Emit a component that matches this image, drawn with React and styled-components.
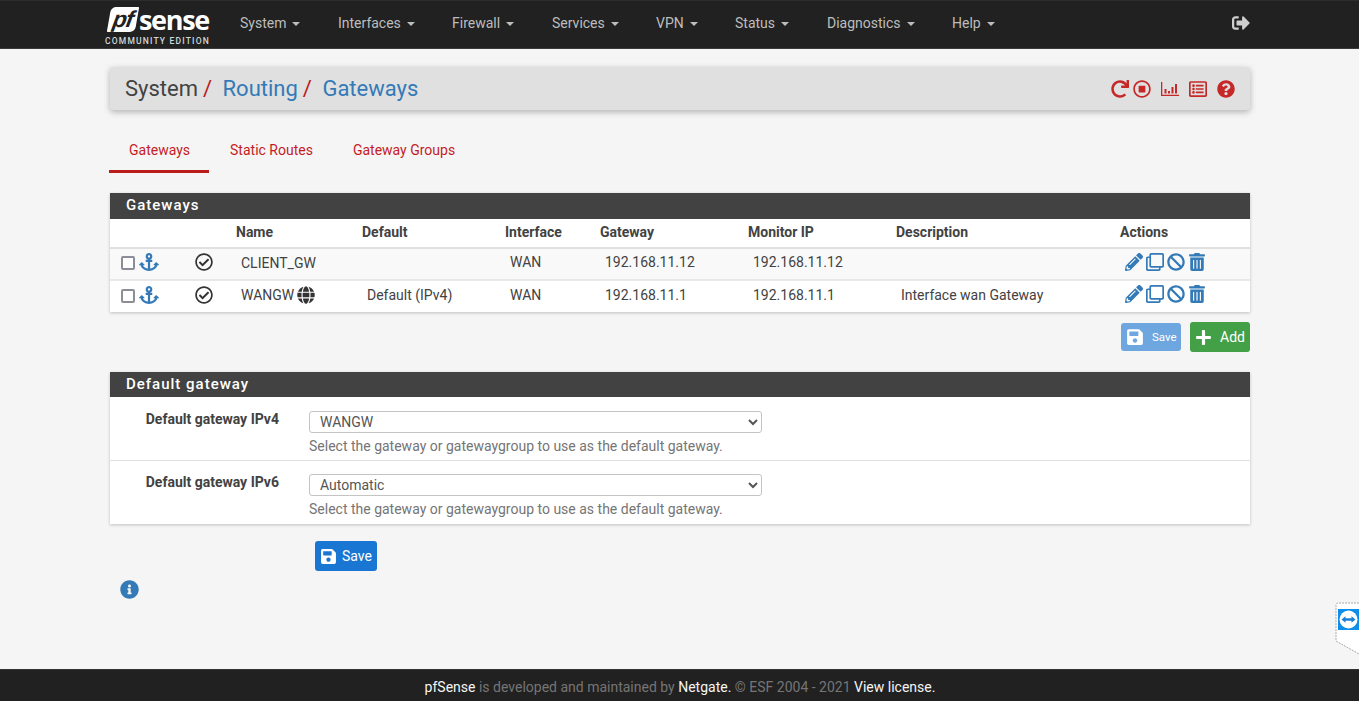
import React from 'react'
import styled, { createGlobalStyle } from 'styled-components'
import {
  FaAnchor,
  FaBan,
  FaGlobe,
  FaInfoCircle,
  FaPencilAlt,
  FaPlus,
  FaQuestionCircle,
  FaRedo,
  FaRegCheckCircle,
  FaRegClone,
  FaRegListAlt,
  FaRegStopCircle,
  FaSave,
  FaSignOutAlt,
  FaTrashAlt,
} from 'react-icons/fa'

const GlobalStyle = createGlobalStyle`
  html, body {
    margin: 0;
    padding: 0;
    background: #f5f5f5;
    font-family: Roboto, "Liberation Sans", sans-serif;
    font-size: 14px;
    color: #424242;
  }
  * { box-sizing: border-box; }
`

const Page = styled.div`
  position: relative;
  min-height: 701px;
  display: flex;
  flex-direction: column;
`

const Navbar = styled.nav`
  height: 49px;
  background: #212121;
  border-top: 1px solid #2c2c2c;
  border-bottom: 1px solid #3a3a3a;
  display: flex;
  align-items: center;
  padding-left: 105px;
  padding-right: 109px;
`

const Logo = styled.div`
  width: 107px;
  height: 44px;
  padding-top: 4px;
  display: flex;
  flex-direction: column;
  color: #fff;
`

const LogoTop = styled.div`
  display: flex;
  align-items: center;
  height: 25px;
  padding-left: 4px;
`

const LogoBox = styled.span`
  width: 28px;
  height: 25px;
  background: #fff;
  color: #212121;
  font: italic 700 23px/24px "Liberation Sans", sans-serif;
  text-align: center;
  border-radius: 5px 1px 5px 1px;
  letter-spacing: -1px;
  transform: skewX(-10deg);
`

const LogoWord = styled.span`
  font: 700 27px/25px "Open Sans", sans-serif;
  margin-left: 2px;
  letter-spacing: -1.3px;
`

const LogoEdition = styled.div`
  font: 500 8.5px/10px Roboto, sans-serif;
  letter-spacing: 1.18px;
  color: #cfd8dc;
  margin-top: 4px;
  white-space: nowrap;
`

const NavList = styled.ul`
  list-style: none;
  margin: 0 0 4px 13px;
  padding: 0;
  display: flex;
  flex: 1;
`

const NavItem = styled.li`
  width: ${props => props.width}px;
  padding-left: 15px;
  color: #bdbdbd;
  white-space: nowrap;
  line-height: 20px;
`

const Caret = styled.span`
  display: inline-block;
  margin-left: 6px;
  vertical-align: middle;
  border-top: 4px solid #bdbdbd;
  border-left: 4px solid transparent;
  border-right: 4px solid transparent;
`

const LogoutButton = styled.span`
  color: #cfcfcf;
  font-size: 18px;
  line-height: 1;
  display: flex;
  margin-bottom: 4px;
`

const Content = styled.main`
  width: 1140px;
  margin: 18px 0 0 110px;
  flex: 1;
`

const Breadcrumb = styled.header`
  height: 43px;
  background: #e0e0e0;
  border-radius: 3px;
  box-shadow: 0 2px 6px rgba(0, 0, 0, 0.28);
  display: flex;
  align-items: center;
  justify-content: space-between;
  padding: 0 15px;
`

const Crumbs = styled.h1`
  margin: 0;
  font-size: 22px;
  font-weight: 400;
  color: #424242;
`

const CrumbLink = styled.a`
  color: #337ab7;
  margin-left: 10.5px;
`

const Slash = styled.span`
  color: #b71c1c;
  margin-left: 5px;
`

const PageIcons = styled.div`
  display: flex;
  align-items: center;
  color: #c62828;
  gap: 10px;
  svg { display: block; }
`

const RefreshPair = styled.span`
  display: flex;
  align-items: center;
  gap: 4px;
`

const Tabs = styled.ul`
  list-style: none;
  margin: 20px 0 20px -1px;
  padding: 0;
  display: flex;
  height: 43px;
`

const Tab = styled.li`
  padding: 12px 19px 0 20px;
  margin-right: 1px;
  color: #c41c24;
  line-height: 16px;
  border-bottom: 3px solid ${props => (props.active ? '#bb1c1c' : 'transparent')};
`

const Panel = styled.section`
  background: #fff;
  box-shadow: 0 1px 3px rgba(0, 0, 0, 0.22);
`

const PanelHeading = styled.h2`
  margin: 0;
  height: ${props => props.height}px;
  padding-left: 16px;
  background: #424242;
  color: #fff;
  font-size: 15px;
  font-weight: 500;
  letter-spacing: 1px;
  line-height: 24px;
`

const Table = styled.table`
  width: 100%;
  border-collapse: collapse;
  table-layout: fixed;
`

const HeadCell = styled.th`
  height: 29px;
  padding: 0 0 2px 5px;
  text-align: left;
  font-weight: 700;
  color: #424242;
  border-bottom: 2px solid #e0e0e0;
`

const Row = styled.tr`
  background: ${props => (props.striped ? '#f9f9f9' : '#fff')};
  border-bottom: ${props => (props.last ? '0' : '2px solid #e8e8e8')};
`

const Cell = styled.td`
  height: 32px;
  padding: 0 0 4px 10px;
  color: #424242;
  white-space: nowrap;
`

const SelectCell = styled(Cell)`
  padding-left: 11px;
`

const StatusCell = styled(Cell)`
  padding-left: 5px;
`

const ActionCell = styled(Cell)`
  padding-bottom: 2px;
`

const CellInner = styled.span`
  display: inline-flex;
  align-items: center;
  gap: ${props => props.gap || 0}px;
  vertical-align: middle;
`

const FakeCheck = styled.span`
  width: 14px;
  height: 14px;
  margin-top: 2px;
  background: #fff;
  border: 2px solid #8d8d99;
  border-radius: 2px;
`

const AnchorIcon = styled(FaAnchor)`
  color: #337ab7;
  font-size: 20px;
`

const StatusIcon = styled(FaRegCheckCircle)`
  color: #333;
  font-size: 18px;
  display: block;
`

const ActionIcons = styled.span`
  display: inline-flex;
  align-items: center;
  gap: 3px;
  color: #337ab7;
  font-size: 18px;
  svg { display: block; }
`

const ButtonRow = styled.div`
  display: flex;
  justify-content: flex-end;
  align-items: center;
  gap: 9px;
  height: 30px;
  margin: 10px 0 20px;
`

const Button = styled.button`
  display: inline-flex;
  align-items: center;
  height: ${props => props.height || 30}px;
  padding: 0 5px;
  gap: ${props => props.gap || 7}px;
  background: ${props => props.bg};
  color: ${props => props.fg || '#fff'};
  border: 0;
  border-radius: 3px;
  font-family: Roboto, sans-serif;
  font-size: ${props => props.size || 14}px;
  width: ${props => props.width}px;
  svg { font-size: ${props => props.icon || 17}px; flex: none; }
`

const FormRow = styled.div`
  display: grid;
  grid-template-columns: 169px 453px;
  column-gap: 30px;
  height: ${props => props.height}px;
  padding-top: ${props => (props.last ? 13 : 14)}px;
  border-bottom: ${props => (props.last ? '0' : '1px solid #e0e0e0')};
`

const FormLabel = styled.label`
  font-weight: 700;
  text-align: right;
  line-height: 16px;
  color: #424242;
`

const Select = styled.select`
  display: block;
  width: 453px;
  height: 22px;
  padding: 0 6px;
  font-family: Roboto, sans-serif;
  font-size: 14px;
  color: #555;
  background: #fff;
  border: 1px solid #c4c4c4;
  border-radius: 3px;
`

const Help = styled.div`
  margin-top: 5px;
  color: #757575;
  line-height: 16px;
`

const SaveWrap = styled.div`
  margin: 17px 0 0 205px;
`

const InfoIcon = styled(FaInfoCircle)`
  display: block;
  color: #337ab7;
  font-size: 19px;
  margin: 9px 0 0 10px;
`

const Footer = styled.footer`
  height: 32px;
  padding-left: 1px;
  background: #212121;
  border-top: 1px solid #333;
  color: #757575;
  text-align: center;
  line-height: 35px;
  font-size: 14px;
`

const FooterStrong = styled.span`
  color: #f5f5f5;
`

const RemoteTab = styled.svg`
  position: absolute;
  right: 0;
  top: 602px;
`

const columns = [80, 41, 126, 143, 95, 148, 148, 224, 135]

const rows = [
  { name: 'CLIENT_GW', def: '', gateway: '192.168.11.12', monitor: '192.168.11.12', desc: '', striped: true },
  { name: 'WANGW', globe: true, def: 'Default (IPv4)', gateway: '192.168.11.1', monitor: '192.168.11.1', desc: 'Interface wan Gateway', last: true },
]

const navItems = [
  ['System', 98],
  ['Interfaces', 114],
  ['Firewall', 100],
  ['Services', 104],
  ['VPN', 79],
  ['Status', 92],
  ['Diagnostics', 125],
  ['Help', 100],
]

const BarChartIcon = () => (
  <svg width="18" height="16" viewBox="0 0 18 16" fill="currentColor">
    <path d="M0 1h1.3v12.7H18V15H0z" />
    <rect x="3.5" y="8" width="2" height="4.5" />
    <rect x="7" y="10" width="2" height="2.5" />
    <rect x="10.5" y="6" width="2" height="6.5" />
    <rect x="14" y="3" width="2" height="9.5" />
  </svg>
)

export default function App() {
  return (
    <Page>
      <GlobalStyle />
      <Navbar>
        <Logo>
          <LogoTop>
            <LogoBox>pf</LogoBox>
            <LogoWord>sense</LogoWord>
          </LogoTop>
          <LogoEdition>COMMUNITY EDITION</LogoEdition>
        </Logo>
        <NavList>
          {navItems.map(([label, width]) => (
            <NavItem key={label} width={width}>
              {label}
              <Caret />
            </NavItem>
          ))}
        </NavList>
        <LogoutButton>
          <FaSignOutAlt />
        </LogoutButton>
      </Navbar>

      <Content>
        <Breadcrumb>
          <Crumbs>
            System<Slash>/</Slash>
            <CrumbLink>Routing</CrumbLink>
            <Slash>/</Slash>
            <CrumbLink>Gateways</CrumbLink>
          </Crumbs>
          <PageIcons>
            <RefreshPair>
              <FaRedo size={18} />
              <FaRegStopCircle size={18} />
            </RefreshPair>
            <BarChartIcon />
            <FaRegListAlt size={18} />
            <FaQuestionCircle size={18} />
          </PageIcons>
        </Breadcrumb>

        <Tabs>
          <Tab active>Gateways</Tab>
          <Tab>Static Routes</Tab>
          <Tab>Gateway Groups</Tab>
        </Tabs>

        <Panel>
          <PanelHeading height={26}>Gateways</PanelHeading>
          <Table>
            <colgroup>
              {columns.map((w, i) => (
                <col key={i} width={w} />
              ))}
            </colgroup>
            <thead>
              <tr>
                <HeadCell />
                <HeadCell />
                <HeadCell>Name</HeadCell>
                <HeadCell>Default</HeadCell>
                <HeadCell>Interface</HeadCell>
                <HeadCell>Gateway</HeadCell>
                <HeadCell>Monitor IP</HeadCell>
                <HeadCell>Description</HeadCell>
                <HeadCell>Actions</HeadCell>
              </tr>
            </thead>
            <tbody>
              {rows.map(row => (
                <Row key={row.name} striped={row.striped} last={row.last}>
                  <SelectCell>
                    <CellInner gap={4}>
                      <FakeCheck />
                      <AnchorIcon />
                    </CellInner>
                  </SelectCell>
                  <StatusCell>
                    <StatusIcon />
                  </StatusCell>
                  <Cell>
                    <CellInner gap={3}>
                      {row.name}
                      {row.globe && <FaGlobe size={18} color="#333" />}
                    </CellInner>
                  </Cell>
                  <Cell>{row.def}</Cell>
                  <Cell>WAN</Cell>
                  <Cell>{row.gateway}</Cell>
                  <Cell>{row.monitor}</Cell>
                  <Cell>{row.desc}</Cell>
                  <ActionCell>
                    <ActionIcons>
                      <FaPencilAlt />
                      <FaRegClone />
                      <FaBan />
                      <FaTrashAlt />
                    </ActionIcons>
                  </ActionCell>
                </Row>
              ))}
            </tbody>
          </Table>
        </Panel>

        <ButtonRow>
          <Button bg="#6ea6e0" height={28} width={60} size={11.5} gap={8} icon={18}>
            <FaSave />
            Save
          </Button>
          <Button bg="#43a047" width={60} gap={8}>
            <FaPlus />
            Add
          </Button>
        </ButtonRow>

        <Panel>
          <PanelHeading height={25}>Default gateway</PanelHeading>
          <FormRow height={64}>
            <FormLabel>Default gateway IPv4</FormLabel>
            <div>
              <Select defaultValue="WANGW">
                <option>WANGW</option>
                <option>CLIENT_GW</option>
              </Select>
              <Help>Select the gateway or gatewaygroup to use as the default gateway.</Help>
            </div>
          </FormRow>
          <FormRow height={63} last>
            <FormLabel>Default gateway IPv6</FormLabel>
            <div>
              <Select defaultValue="Automatic">
                <option>Automatic</option>
                <option>WANGW</option>
              </Select>
              <Help>Select the gateway or gatewaygroup to use as the default gateway.</Help>
            </div>
          </FormRow>
        </Panel>

        <SaveWrap>
          <Button bg="#1976d2" width={62} gap={5}>
            <FaSave />
            Save
          </Button>
        </SaveWrap>
        <InfoIcon />
      </Content>

      <Footer>
        <FooterStrong>pfSense</FooterStrong> is developed and maintained by{' '}
        <FooterStrong>Netgate.</FooterStrong> © ESF 2004 - 2021{' '}
        <FooterStrong>View license.</FooterStrong>
      </Footer>

      <RemoteTab width="24" height="54" viewBox="0 0 24 54">
        <path d="M24 1H3a2 2 0 0 0-2 2v36l23 13z" fill="#fff" />
        <path d="M24 1H3a2 2 0 0 0-2 2v36l23 13" fill="none" stroke="#aaa" strokeDasharray="2 1" />
        <rect x="3" y="7" width="21" height="21" fill="#0e8ee9" />
        <circle cx="13.5" cy="17.5" r="9" fill="#fff" />
        <path d="M6.5 17.5l4-3.2v2h6v-2l4 3.2-4 3.2v-2h-6v2z" fill="#1b7fd4" />
      </RemoteTab>
    </Page>
  )
}
